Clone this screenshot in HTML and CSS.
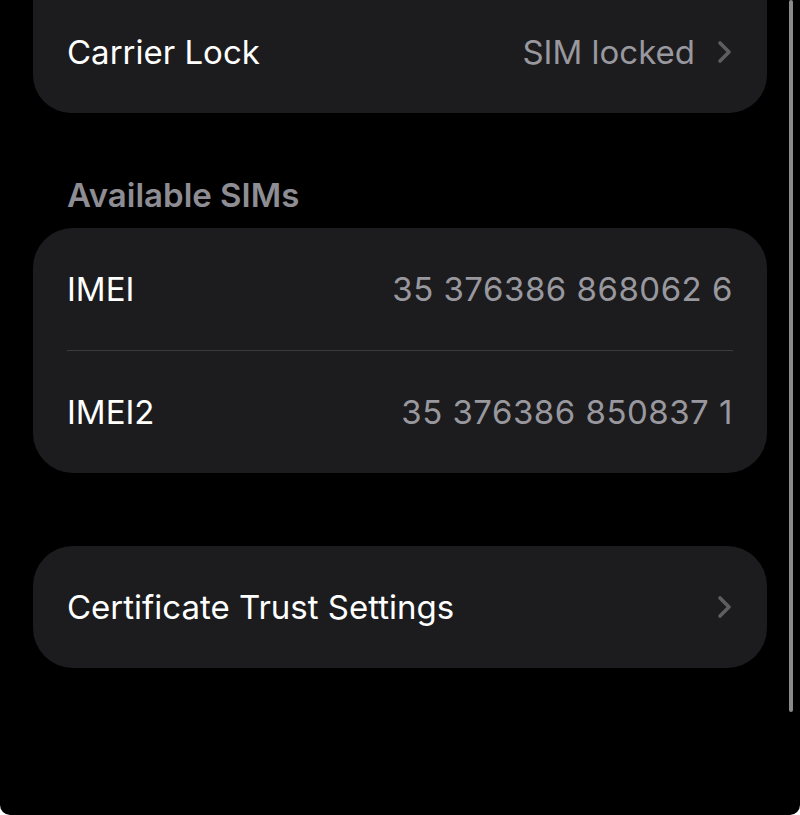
FILE: index.html
```html
<!DOCTYPE html>
<html lang="en">
<head>
  <meta charset="UTF-8" />
  <meta name="viewport" content="width=device-width, initial-scale=1.0"/>
  <title>About</title>
  <link rel="stylesheet" href="styles.css">
</head>
<body>
  <div class="screen">
    <div class="card card-top">
      <div class="row">
        <span class="label">Carrier Lock</span>
        <span class="value">SIM locked</span>
        <svg class="chevron" width="16" height="24" viewBox="0 0 16 24"><path d="M3 3 L12 12 L3 21" fill="none" stroke="#5d5d62" stroke-width="3.6" stroke-linecap="round" stroke-linejoin="round"/></svg>
      </div>
    </div>

    <h2 class="section-title">Available SIMs</h2>
    <div class="card">
      <div class="row">
        <span class="label">IMEI</span>
        <span class="value number">35 376386 868062 6</span>
      </div>
      <div class="divider"></div>
      <div class="row">
        <span class="label">IMEI2</span>
        <span class="value number">35 376386 850837 1</span>
      </div>
    </div>

    <div class="card card-spaced">
      <div class="row">
        <span class="label">Certificate Trust Settings</span>
        <svg class="chevron" width="16" height="24" viewBox="0 0 16 24"><path d="M3 3 L12 12 L3 21" fill="none" stroke="#5d5d62" stroke-width="3.6" stroke-linecap="round" stroke-linejoin="round"/></svg>
      </div>
    </div>

    <div class="scrollbar"></div>
  </div>
</body>
</html>
```

FILE: styles.css
```css
body {
  margin: 0;
  background: #ffffff;
  font-family: Inter, "Noto Sans", sans-serif;
}

.screen {
  position: relative;
  height: 815px;
  overflow: hidden;
  background: #000;
  border-radius: 0 0 10px 10px;
  padding: 0 33px;
  box-sizing: border-box;
}

.card {
  background: #1c1c1e;
  border-radius: 40px;
}

.card-top {
  margin-top: -9px;
  border-radius: 0 0 38px 38px;
}

.card-spaced {
  margin-top: 73px;
}

.row {
  display: flex;
  align-items: center;
  height: 122px;
  padding: 0 34px;
}

.label {
  color: #ffffff;
  font-size: 33px;
  flex: 1;
}

.value {
  color: #98989e;
  font-size: 33px;
}

.number {
  letter-spacing: 0.5px;
}

.chevron {
  margin-left: 22px;
}

.divider {
  height: 1px;
  background: #3a3a3c;
  margin: 0 34px;
}

.section-title {
  margin: 0;
  padding: 62px 34px 13px;
  line-height: 40px;
  font-size: 33px;
  font-weight: 600;
  color: #8d8d93;
}

.scrollbar {
  position: absolute;
  top: 0;
  right: 7px;
  width: 4px;
  height: 712px;
  border-radius: 2px;
  background: #8a8a8c;
}
```
